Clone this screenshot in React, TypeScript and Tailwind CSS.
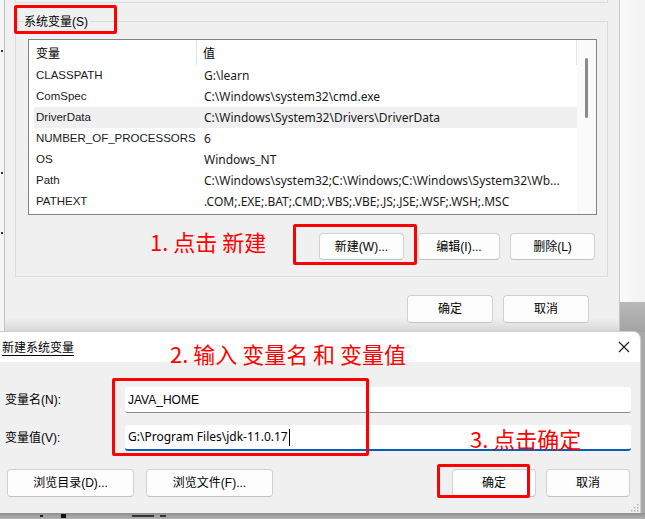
import React from "react";

const FONT = '"Liberation Sans", "Noto Sans CJK SC", sans-serif';
const CJK = '"Noto Sans CJK SC", "Liberation Sans", sans-serif';
const WIDE = '"Noto Sans", "Noto Sans CJK SC", sans-serif';

type Row = { name: string; value: string; selected?: boolean };

const rows: Row[] = [
  { name: "CLASSPATH", value: "G:\\learn" },
  { name: "ComSpec", value: "C:\\Windows\\system32\\cmd.exe" },
  { name: "DriverData", value: "C:\\Windows\\System32\\Drivers\\DriverData", selected: true },
  { name: "NUMBER_OF_PROCESSORS", value: "6" },
  { name: "OS", value: "Windows_NT" },
  { name: "Path", value: "C:\\Windows\\system32;C:\\Windows;C:\\Windows\\System32\\Wb..." },
  { name: "PATHEXT", value: ".COM;.EXE;.BAT;.CMD;.VBS;.VBE;.JS;.JSE;.WSF;.WSH;.MSC" },
];

function Btn({ label, w, h = "h-[27px]" }: { label: string; w: string; h?: string }) {
  return (
    <div
      className={`${w} ${h} flex items-center justify-center rounded-[4px] border border-[#d1d1d1] border-b-[#c2c2c2] bg-[#fdfdfd] text-[12px] text-black`}
    >
      {label}
    </div>
  );
}

function RedBox({ cls }: { cls: string }) {
  return <div className={`absolute border-[3px] border-[#ff0000] rounded-[2px] ${cls}`} />;
}

export default function App() {
  return (
    <div
      className="relative w-[645px] h-[519px] overflow-hidden bg-[#a9a9a9]"
      style={{ fontFamily: FONT }}
    >
      {/* desktop area to the right of the top window */}
      <div className="absolute left-[619px] top-0 w-[26px] h-[302px] bg-[linear-gradient(to_right,#fbfbfb,#f2f2f2)]" />
      <div className="absolute left-[619px] top-[302px] w-[26px] h-[30px] bg-[linear-gradient(to_bottom,#b9b9b9,#a3a3a3)]" />

      {/* Top window: 环境变量 */}
      <div className="absolute left-0 top-0 w-[620px] h-[332px] flex border-r border-[#c6c6c6] bg-[linear-gradient(to_bottom,#f0f0f0_0px,#f0f0f0_318px,#d6d6d6_332px)]">
        {/* sliver of window behind on the left */}
        <div className="relative w-[5px] h-full border-r border-[#c2c2c2] bg-[#f4f4f4] flex flex-col">
          <div className="mt-[50px] ml-[1px] w-[2px] h-[2px] bg-[#333]" />
          <div className="mt-[120px] ml-[1px] w-[2px] h-[2px] bg-[#333]" />
          <div className="mt-[58px] ml-[1px] w-[2px] h-[2px] bg-[#333]" />
        </div>

        <div className="flex-1 flex flex-col">
          {/* bottom of previous group box */}
          <div className="ml-[10px] w-[593px] h-[3px] border-x border-b border-[#dcdcdc]" />

          {/* 系统变量 group */}
          <div className="relative ml-[10px] mt-[18px] w-[593px] h-[256px] border border-[#dcdcdc] flex flex-col">
            <div className="absolute left-[8px] top-[-8px] pr-[2px] bg-[#f0f0f0] text-[12px] leading-[16px] text-black">
              系统变量(S)
            </div>

            {/* list view */}
            <div className="ml-[12px] mt-[17px] w-[569px] h-[176px] border border-[#838383] bg-white flex">
              <div className="flex-1 flex flex-col">
                <div className="h-[25px] flex items-center text-[12px] text-black">
                  <div className="w-[168px] h-full pl-[7px] pt-[2px] flex items-center border-r border-[#e5e5e5]">变量</div>
                  <div className="flex-1 h-full pl-[6px] pt-[2px] flex items-center border-r border-[#e5e5e5]">值</div>
                </div>
                {rows.map((r) => (
                  <div
                    key={r.name}
                    className={`ml-[5px] h-[21px] flex items-center text-[#1a1a1a] ${
                      r.selected ? "bg-[#f0f0f0]" : ""
                    }`}
                  >
                    <div className="w-[170px] pl-[2px] whitespace-nowrap text-[11.5px]">{r.name}</div>
                    <div className="flex-1 whitespace-nowrap overflow-hidden text-[12px]" style={{ fontFamily: WIDE }}>
                      {r.value}
                    </div>
                  </div>
                ))}
              </div>
              <div className="w-[19px] h-full bg-[#fafafa] flex flex-col">
                <div className="mt-[18px] ml-[8px] w-[3px] h-[60px] rounded-full bg-[#8a8a8a]" />
              </div>
            </div>

            {/* buttons */}
            <div className="mt-[18px] mr-[12px] flex justify-end">
              <Btn label="新建(W)..." w="w-[85px]" />
              <div className="ml-[14px]">
                <Btn label="编辑(I)..." w="w-[82px]" />
              </div>
              <div className="ml-[10px]">
                <Btn label="删除(L)" w="w-[85px]" />
              </div>
            </div>
          </div>

          {/* OK / Cancel */}
          <div className="mt-[18px] pr-[30px] flex justify-end gap-[10px]">
            <Btn label="确定" w="w-[86px]" h="h-[28px]" />
            <Btn label="取消" w="w-[86px]" h="h-[28px]" />
          </div>
        </div>
      </div>

      {/* Second dialog: 新建系统变量 */}
      <div className="absolute left-0 top-[331px] w-[641px] h-[182px] rounded-tr-[8px] border-r border-t border-[#cfcfcf] bg-[#f0f0f0] flex flex-col overflow-hidden">
        <div className="h-[30px] bg-white flex items-center justify-between">
          <span className="pl-[2px] text-[12px] text-black underline decoration-1 underline-offset-[3px]" style={{ fontFamily: CJK }}>
            新建系统变量
          </span>
          <svg width="12" height="12" viewBox="0 0 12 12" className="mr-[10px]">
            <path d="M1 1 L11 11 M11 1 L1 11" stroke="#1a1a1a" strokeWidth="1.1" fill="none" />
          </svg>
        </div>

        <div className="flex flex-col pt-[25px]">
          <div className="flex items-center">
            <div className="w-[125px] pl-[5px] text-[12px] text-black">变量名(N):</div>
            <div className="w-[506px] h-[26px] bg-white rounded-[3px] border-b border-[#8a8a8a] flex items-center pl-[3px] text-[12px] text-black">
              JAVA_HOME
            </div>
          </div>
          <div className="mt-[12px] flex items-center">
            <div className="w-[125px] pl-[5px] text-[12px] text-black">变量值(V):</div>
            <div className="w-[506px] h-[26px] bg-white rounded-[3px] border-b-2 border-[#005fb8] flex items-center pl-[3px] text-[12px] text-black">
              <span style={{ fontFamily: WIDE }}>G:\Program Files\jdk-11.0.17</span>
              <span className="ml-[1px] w-[1px] h-[17px] bg-black" />
            </div>
          </div>

          <div className="mt-[18px] flex items-center">
            <div className="ml-[7px]">
              <Btn label="浏览目录(D)..." w="w-[127px]" h="h-[28px]" />
            </div>
            <div className="ml-[12px]">
              <Btn label="浏览文件(F)..." w="w-[127px]" h="h-[28px]" />
            </div>
            <div className="ml-auto mr-[10px] flex gap-[10px]">
              <Btn label="确定" w="w-[84px]" h="h-[28px]" />
              <Btn label="取消" w="w-[84px]" h="h-[28px]" />
            </div>
          </div>
        </div>

        {/* resize grip */}
        <svg width="10" height="10" viewBox="0 0 10 10" className="absolute right-[1px] bottom-[1px]">
          {[
            [8, 2],
            [8, 5],
            [5, 5],
            [8, 8],
            [5, 8],
            [2, 8],
          ].map(([x, y]) => (
            <rect key={`${x}-${y}`} x={x} y={y} width="1.5" height="1.5" fill="#b5b5b5" />
          ))}
        </svg>
      </div>

      {/* fragments of the window behind, below the dialog */}
      <div className="absolute left-0 top-[513px] w-[645px] h-[6px] bg-[linear-gradient(to_bottom,#8f8f8f,#b3b3b3)]" />
      <div className="absolute left-[40px] top-[515px] w-[3px] h-[2px] bg-[#222]" />
      <div className="absolute left-[61px] top-[514px] w-[5px] h-[4px] bg-[#111]" />
      <div className="absolute left-[132px] top-[515px] w-[22px] h-[2px] bg-[#333]" />
      <div className="absolute left-[160px] top-[515px] w-[6px] h-[2px] bg-[#333]" />

      {/* annotations */}
      <RedBox cls="left-[14px] top-[5px] w-[103px] h-[29px]" />
      <RedBox cls="left-[293px] top-[224px] w-[124px] h-[41px]" />
      <RedBox cls="left-[112px] top-[378px] w-[257px] h-[78px]" />
      <RedBox cls="left-[437px] top-[464px] w-[93px] h-[34px]" />

      <div className="absolute left-[150px] top-[226px] text-[22px] leading-[30px] text-[#ff0000] whitespace-nowrap" style={{ fontFamily: CJK }}>
        1. 点击 新建
      </div>
      <div className="absolute left-[170px] top-[338px] text-[22px] leading-[30px] text-[#ff0000] whitespace-nowrap" style={{ fontFamily: CJK }}>
        2. 输入 变量名 和 变量值
      </div>
      <div className="absolute left-[470px] top-[423px] text-[22px] leading-[30px] text-[#ff0000] whitespace-nowrap" style={{ fontFamily: CJK }}>
        3. 点击确定
      </div>
    </div>
  );
}
